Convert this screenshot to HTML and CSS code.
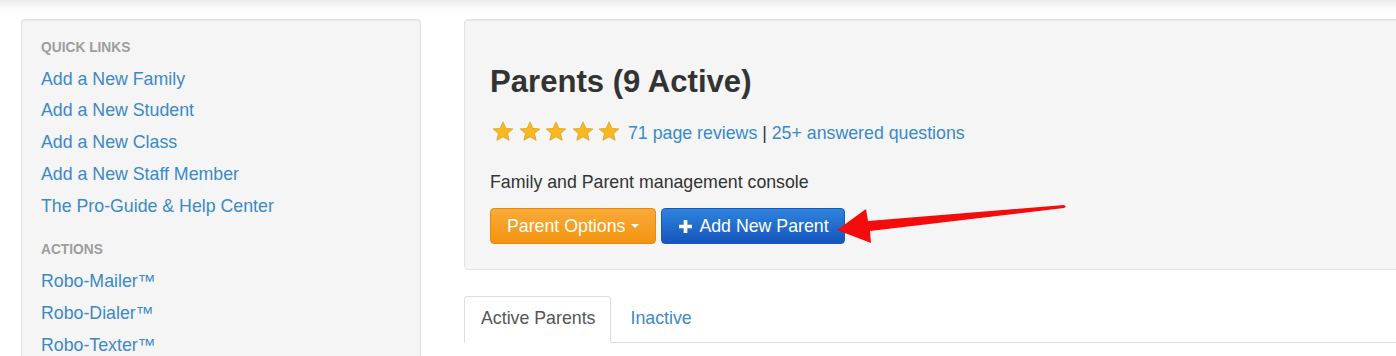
FILE: index.html
```html
<!DOCTYPE html>
<html lang="en">
<head>
    <meta charset="UTF-8">
    <meta name="viewport" content="width=device-width, initial-scale=1.0">
    <title>Parents</title>
    <link rel="stylesheet" href="styles.css">
</head>
<body>
    <div class="layout">
        <aside class="sidebar">
            <h4 class="side-title">Quick Links</h4>
            <ul class="side-links">
                <li><a href="#">Add a New Family</a></li>
                <li><a href="#">Add a New Student</a></li>
                <li><a href="#">Add a New Class</a></li>
                <li><a href="#">Add a New Staff Member</a></li>
                <li><a href="#">The Pro-Guide &amp; Help Center</a></li>
            </ul>

            <h4 class="side-title side-title-next">Actions</h4>
            <ul class="side-links">
                <li><a href="#">Robo-Mailer™</a></li>
                <li><a href="#">Robo-Dialer™</a></li>
                <li><a href="#">Robo-Texter™</a></li>
            </ul>
        </aside>

        <main class="content">
            <section class="header-panel">
                <h1 class="page-title">Parents (9 Active)</h1>

                <div class="rating">
                    <span class="stars">
                        <svg class="star" viewBox="0 0 24 23"><path d="M12 1l3.1 7.1 7.7.6-5.9 5 1.8 7.5L12 17.2l-6.7 4 1.8-7.5-5.9-5 7.7-.6z"/></svg>
                        <svg class="star" viewBox="0 0 24 23"><path d="M12 1l3.1 7.1 7.7.6-5.9 5 1.8 7.5L12 17.2l-6.7 4 1.8-7.5-5.9-5 7.7-.6z"/></svg>
                        <svg class="star" viewBox="0 0 24 23"><path d="M12 1l3.1 7.1 7.7.6-5.9 5 1.8 7.5L12 17.2l-6.7 4 1.8-7.5-5.9-5 7.7-.6z"/></svg>
                        <svg class="star" viewBox="0 0 24 23"><path d="M12 1l3.1 7.1 7.7.6-5.9 5 1.8 7.5L12 17.2l-6.7 4 1.8-7.5-5.9-5 7.7-.6z"/></svg>
                        <svg class="star" viewBox="0 0 24 23"><path d="M12 1l3.1 7.1 7.7.6-5.9 5 1.8 7.5L12 17.2l-6.7 4 1.8-7.5-5.9-5 7.7-.6z"/></svg>
                    </span>
                    <span class="rating-text"><a href="#">71 page reviews</a> | <a href="#">25+ answered questions</a></span>
                </div>

                <p class="page-desc">Family and Parent management console</p>

                <div class="button-row">
                    <button class="btn btn-orange">Parent Options <span class="caret"></span></button>
                    <button class="btn btn-blue">
                        <svg class="plus" viewBox="0 0 14 14"><path d="M5 0h4v5h5v4H9v5H5V9H0V5h5z"/></svg>
                        Add New Parent
                    </button>
                </div>

                <!-- annotation arrow pointing at the button -->
                <svg class="arrow" viewBox="0 0 232 42">
                    <polygon points="2,27 31,6 33,18 229,2 231,3.5 229,5 35,28 36,40"/>
                </svg>
            </section>

            <ul class="tabs">
                <li class="tab active"><a href="#">Active Parents</a></li>
                <li class="tab"><a href="#">Inactive</a></li>
            </ul>
        </main>
    </div>
</body>
</html>
```

FILE: styles.css
```css
* {
    margin: 0;
    padding: 0;
    box-sizing: border-box;
}

body {
    font-family: "Liberation Sans", Arial, sans-serif;
    font-size: 17.75px;
    line-height: 25px;
    color: #333;
    background: linear-gradient(to bottom, #ececec 0, #fbfbfb 8px, #fff 14px) no-repeat;
    background-color: #fff;
    overflow: hidden;
    height: 356px;
}

a {
    color: #3a89c9;
    text-decoration: none;
}

.layout {
    display: grid;
    grid-template-columns: 400px 990px;
    column-gap: 43px;
    padding: 19px 0 0 21px;
    height: 356px;
}

/* sidebar */
.sidebar {
    background: #f5f5f5;
    border: 1px solid #e3e3e3;
    border-bottom: 0;
    border-radius: 4px 4px 0 0;
    box-shadow: inset 0 1px 1px rgba(0, 0, 0, 0.05);
    padding: 18px 19px 0;
    overflow: hidden;
}

.side-title {
    font-size: 13.75px;
    line-height: 20px;
    font-weight: bold;
    text-transform: uppercase;
    color: #9d9d9d;
    margin-bottom: 5.5px;
}

.side-title-next {
    margin-top: 17.8px;
    margin-bottom: 6px;
}

.side-links {
    list-style: none;
}

.side-links li {
    line-height: 31.8px;
}

/* main header panel */
.header-panel {
    position: relative;
    background: #f5f5f5;
    border: 1px solid #e3e3e3;
    border-radius: 4px;
    box-shadow: inset 0 1px 1px rgba(0, 0, 0, 0.05);
    padding: 45px 25px 25px;
}

.page-title {
    font-size: 31.1px;
    line-height: 34px;
    font-weight: bold;
    color: #333;
}

.rating {
    display: flex;
    align-items: flex-start;
    margin-top: 20.5px;
    line-height: 26px;
}

.stars {
    display: flex;
    gap: 4.5px;
    margin-top: 1px;
    margin-left: 2px;
}

.star {
    width: 22px;
    height: 21px;
    fill: #f9b820;
    stroke: #d79a16;
    stroke-width: 0.8;
}

.rating-text {
    margin-left: 8px;
    color: #333;
}

.page-desc {
    margin-top: 24px;
}

.button-row {
    display: flex;
    gap: 5px;
    margin-top: 13.5px;
}

.btn {
    display: inline-flex;
    align-items: center;
    font-family: inherit;
    font-size: 17.75px;
    line-height: 22px;
    color: #fff;
    padding: 6px 16px;
    border: 1px solid;
    border-radius: 4px;
    cursor: pointer;
}

.btn-orange {
    background: linear-gradient(to bottom, #f9aa38 0%, #f29410 100%);
    border-color: #e48a0c;
}

.btn-blue {
    background: linear-gradient(to bottom, #2f84de 0%, #1655bd 100%);
    border-color: #1b57b3;
    padding-right: 15px;
}

.caret {
    display: inline-block;
    width: 0;
    height: 0;
    margin-left: 6px;
    border-top: 4.5px solid #fff;
    border-left: 4px solid transparent;
    border-right: 4px solid transparent;
}

.plus {
    width: 13px;
    height: 13px;
    fill: #fff;
    margin-right: 7px;
    margin-left: 1px;
}

.arrow {
    position: absolute;
    left: 370px;
    top: 183px;
    width: 232px;
    height: 42px;
    fill: #f40b0b;
}

/* tabs */
.tabs {
    display: flex;
    list-style: none;
    margin-top: 26px;
    border-bottom: 1px solid #ddd;
}

.tab {
    margin-right: 2px;
    margin-bottom: -1px;
}

.tab a {
    display: block;
    padding: 9px 15px 11px 16px;
    line-height: 25px;
    border: 1px solid transparent;
    border-radius: 4px 4px 0 0;
}

.tab.active a {
    color: #555;
    background: #fff;
    border-color: #ddd #ddd transparent;
}
```
